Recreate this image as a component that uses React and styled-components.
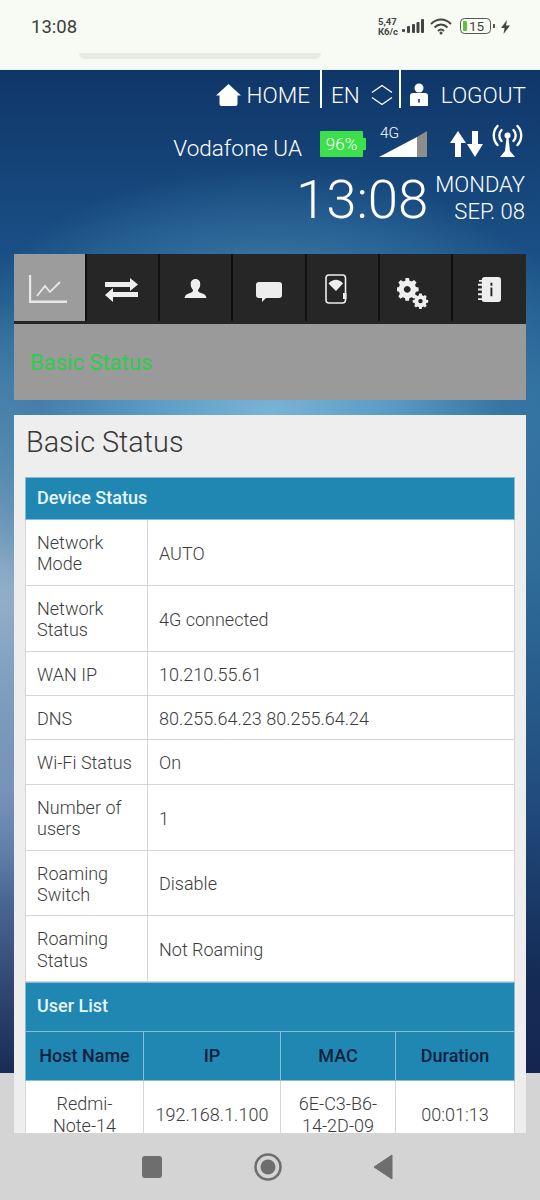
import React from "react";
import styled, { createGlobalStyle } from "styled-components";

const GlobalStyle = createGlobalStyle`
  html, body {
    margin: 0;
    padding: 0;
    width: 540px;
    height: 1200px;
    overflow: hidden;
    font-family: Roboto, "Liberation Sans", sans-serif;
  }
  * { box-sizing: border-box; }
`;

const Screen = styled.div`
  width: 540px;
  height: 1200px;
  display: flex;
  flex-direction: column;
  overflow: hidden;
  background: #d4d4d4;
`;

const StatusBar = styled.div`
  height: 70px;
  flex: none;
  position: relative;
  display: flex;
  justify-content: space-between;
  align-items: center;
  padding: 0 30px 16px 31px;
  background: #f8fbf3;
  border-bottom: 1px solid #e6f0f6;
`;

const PhoneTime = styled.div`
  font-size: 18.5px;
  font-weight: 400;
  color: #3b3d3b;
`;

const StatusIcons = styled.div`
  display: flex;
  align-items: center;
  gap: 4px;
`;

const NetSpeed = styled.div`
  font-size: 9.5px;
  line-height: 9.5px;
  font-weight: 700;
  color: #444;
`;

const Pill = styled.div`
  position: absolute;
  left: 79px;
  top: 53px;
  width: 242px;
  height: 6px;
  border-radius: 0 0 14px 14px;
  background: #e7eae3;
`;

const Page = styled.div`
  flex: 1;
  min-height: 0;
  overflow: hidden;
  padding: 0 14px;
  background:
    radial-gradient(ellipse 340px 250px at 270px 345px, #7ab4d6 0%, #5a9cc5 35%, rgba(60, 125, 170, 0.6) 68%, rgba(60, 125, 170, 0) 100%),
    radial-gradient(ellipse 300px 300px at 0 530px, rgba(150, 178, 202, 0.95) 0%, rgba(150, 178, 202, 0) 100%),
    radial-gradient(ellipse 320px 300px at 0 720px, rgba(115, 140, 185, 0.85) 0%, rgba(115, 140, 185, 0) 100%),
    linear-gradient(180deg, #0f3669 0%, #1a4f85 18%, #2d6c9c 32%, #2f6c9a 50%, #214d7e 72%, #152c57 90%, #132650 100%);
  background-size: 540px 1003px;
  background-repeat: no-repeat;
`;

const TopNav = styled.div`
  display: flex;
  justify-content: flex-end;
  height: 38px;
  color: #fff;
  font-size: 22.5px;
  font-weight: 300;
`;

const NavItem = styled.div`
  display: flex;
  align-items: center;
  gap: ${(p) => p.$gap}px;
  padding: 11px ${(p) => p.$right}px 0 ${(p) => p.$left}px;
  border-right: ${(p) => (p.$divider ? "2px solid #fff" : "none")};
`;

const SignalRow = styled.div`
  display: flex;
  justify-content: flex-end;
  align-items: flex-end;
  height: 49px;
  color: #fff;
  margin-right: 3px;
`;

const Carrier = styled.div`
  font-size: 22.5px;
  font-weight: 300;
  margin-right: 18px;
  line-height: 27px;
  margin-bottom: -5px;
`;

const Battery = styled.div`
  width: 43px;
  height: 26px;
  margin-right: 16px;
  display: flex;
  align-items: center;
  justify-content: center;
  font-size: 17px;
  font-weight: 300;
  color: #fff;
  background: #3ce04a;
  border-radius: 1px;
  position: relative;
  &::after {
    content: "";
    position: absolute;
    right: -3px;
    top: 7px;
    width: 3px;
    height: 12px;
    background: #3ce04a;
  }
`;

const SignalWrap = styled.div`
  position: relative;
  display: flex;
  margin-right: 23px;
`;

const NetType = styled.span`
  position: absolute;
  left: 1px;
  top: -7px;
  font-size: 15.5px;
  line-height: 18px;
  font-weight: 300;
`;

const ArrowWrap = styled.div`
  display: flex;
  margin-right: 9px;
`;

const ClockRow = styled.div`
  display: flex;
  justify-content: flex-end;
  align-items: center;
  height: 84px;
  color: #fff;
  font-weight: 300;
  margin-right: 1px;
`;

const ClockTime = styled.div`
  font-size: 54.5px;
  line-height: 68px;
  font-weight: 300;
  margin-right: 7px;
`;

const ClockDate = styled.div`
  font-size: 22px;
  line-height: 27px;
  text-align: right;
  margin-top: -3px;
`;

const TabBar = styled.div`
  display: flex;
  margin-top: 13px;
  height: 70px;
  background: #262626;
`;

const Tab = styled.div`
  width: 73.14px;
  height: 67px;
  display: flex;
  align-items: center;
  justify-content: center;
  padding: ${(p) => p.$top || 0}px ${(p) => p.$end || 0}px 0 0;
  background: ${(p) => (p.$active ? "#9c9c9c" : "transparent")};
  border-right: 2px solid #111;
  &:last-child { border-right: none; }
`;

const SubBar = styled.div`
  height: 76px;
  display: flex;
  align-items: center;
  padding: 0 16px;
  background: #9a9a9a;
  color: #2fcc4a;
  font-size: 22px;
  font-weight: 400;
`;

const Card = styled.div`
  margin-top: 15px;
  padding: 10px 11px 0;
  height: 720px;
  background: #eee;
`;

const Title = styled.h1`
  margin: 0 0 17px 1px;
  font-size: 28.8px;
  line-height: 35px;
  font-weight: 300;
  color: #383838;
`;

const Table = styled.table`
  width: 490px;
  border-collapse: collapse;
  table-layout: fixed;
  background: #fff;
  font-size: 18px;
  line-height: 21.4px;
  font-weight: 300;
  color: #3c3c3c;
`;

const Section = styled.th`
  height: ${(p) => p.$h}px;
  padding: 0 11px ${(p) => p.$pb || 0}px;
  text-align: left;
  font-weight: 500;
  font-size: 18px;
  color: #e6f6fb;
  background: #2087b3;
  border: 1px solid #86bdd6;
`;

const HeadCell = styled.th`
  height: 49px;
  padding: 0 0 2px;
  font-weight: 500;
  font-size: 18px;
  color: #0d2140;
  background: #2087b3;
  border: 1px solid #86bdd6;
`;

const Cell = styled.td`
  padding: 12px 11px 10px;
  border: 1px solid #d6d6d6;
  text-align: ${(p) => (p.$center ? "center" : "left")};
`;

const BottomNav = styled.div`
  height: 67px;
  flex: none;
  background: #d4d4d4;
`;

const HomeIcon = () => (
  <svg width="25" height="22" viewBox="0 0 25 22"><path fill="#fff" d="M12.500 0 25 11.500h-3.500V20q0 2-2 2h-14q-2 0-2-2v-8.500H0Z" /></svg>
);

const UpDownIcon = () => (
  <svg width="22" height="22" viewBox="0 0 22 22" fill="none" stroke="#fff" strokeWidth="1.400"><path d="M1 8.500 11 1.500l10 7M1 13.500 11 20.500l10-7" /></svg>
);

const UserBadgeIcon = () => (
  <svg width="20" height="24" viewBox="0 0 20 24"><circle cx="10" cy="5" r="4.500" fill="#fff" /><path fill="#fff" fillRule="evenodd" d="M1 23V13q0-3 3-3h12q3 0 3 3v10ZM9.200 16v3.500h1.600V16Z" /></svg>
);

const SignalIcon = () => (
  <svg width="48" height="26" viewBox="0 0 48 26"><path fill="#fff" d="M0 26 38 6v20Z" /><path fill="#8d8d8d" d="M38 6 48 0v26H38Z" /></svg>
);

const ArrowsIcon = () => (
  <svg width="33" height="26" viewBox="0 0 33 26"><path fill="#fff" d="M8 0 16 12H11V26H5V12H0ZM25 26 33 13H28V0H22V13H17Z" /></svg>
);

const AntennaIcon = () => (
  <svg width="31" height="33" viewBox="0 0 31 33" fill="none" stroke="#fff" strokeWidth="2.400">
    <circle cx="15.500" cy="11.500" r="3" fill="#fff" stroke="none" />
    <path d="M9.500 6a8 8 0 0 0 0 11M21.500 6a8 8 0 0 1 0 11M5.500 2a14 14 0 0 0 0 19M25.500 2a14 14 0 0 1 0 19" strokeLinecap="round" />
    <path fill="#fff" stroke="none" d="M14.500 14h2l1.500 13 5 6H8l5-6Z" />
  </svg>
);

const tabs = [
  {
    top: 2,
    end: 3,
    icon: <svg width="38" height="28" viewBox="0 0 38 28" fill="none" stroke="#e8e8e8" strokeWidth="1.800"><path d="M1 0v26.800h37" strokeWidth="2.400" /><path d="M8 21 16 11l5 6L31 7" /></svg>,
  },
  {
    top: 4,
    end: 2,
    icon: <svg width="33" height="24" viewBox="0 0 33 24"><path fill="#eee" d="M0 4h25V0l8 6.500-8 6.500V9H0ZM33 14H8v-4l-8 7 8 7v-5h25Z" /></svg>,
  },
  {
    top: 2,
    icon: <svg width="23" height="19" viewBox="0 0 24 20"><path fill="#eee" d="M12 0c3.500 0 5 2.600 5 5.500 0 2.500-1 4.500-2.400 6 0 2 1.400 2.700 4 3.600 2.700.9 4.400 2 5 4.900H.4c.6-2.900 2.300-4 5-4.900 2.600-.9 4-1.600 4-3.600C8 10 7 8 7 5.500 7 2.600 8.500 0 12 0Z" /></svg>,
  },
  {
    top: 9,
    icon: <svg width="26" height="20" viewBox="0 0 26 20"><path fill="#eee" d="M3 0h20q3 0 3 3v10q0 3-3 3H10l-4 4v-4H3q-3 0-3-3V3q0-3 3-3Z" /></svg>,
  },
  {
    top: 2,
    end: 12,
    icon: <svg width="22" height="30" viewBox="0 0 22 30"><rect x="1" y="1" width="19.500" height="28" rx="3" fill="none" stroke="#eee" strokeWidth="1.600" /><path fill="#eee" d="M3.500 9.500C8 4.500 14 4.500 18 9.500l-7 7.500ZM18 19h3.500v6H18Z" /></svg>,
  },
  {
    top: 13,
    end: 4,
    icon: <svg width="32" height="32" viewBox="0 0 36 36"><g fill="#eee"><path fillRule="evenodd" d="M9.500 0h4l.6 3 2.500 1 2.600-1.700 2.800 2.800L20.300 7.700l1 2.500 3 .6v4l-3 .6-1 2.500 1.700 2.600-2.800 2.800-2.600-1.700-2.500 1-.6 3h-4l-.6-3-2.500-1-2.600 1.700L1.500 20.500l1.700-2.600-1-2.500-3-.6v-4l3-.6 1-2.500L1.500 5.100 4.300 2.300 6.900 4l2.500-1ZM11.500 9a3.800 3.800 0 1 0 .01 0Z" /><path fillRule="evenodd" d="M25 17.500h2.800l.4 2 1.600.7 1.700-1.100 2 2-1.100 1.700.7 1.600 2 .4v2.800l-2 .4-.7 1.600 1.100 1.700-2 2-1.700-1.100-1.600.7-.4 2H25l-.4-2-1.600-.7-1.700 1.100-2-2 1.100-1.700-.7-1.600-2-.4v-2.800l2-.4.7-1.600-1.100-1.700 2-2 1.700 1.100 1.600-.7ZM26.400 23.500a2.500 2.500 0 1 0 .01 0Z" /></g></svg>,
  },
  {
    top: 4,
    icon: <svg width="23" height="25" viewBox="0 0 24 26"><path fill="#eee" fillRule="evenodd" d="M7 0h14q3 0 3 3v20q0 3-3 3H7q-3 0-3-2H0v-2h4v-3H0v-2h4v-3H0v-2h4V9H0V7h4V5H1V3h3q0-3 3-3ZM13 6v3h2V6Zm0 5v9h2v-9Z" /></svg>,
  },
];

const deviceRows = [
  ["Network Mode", "AUTO"],
  ["Network Status", "4G connected"],
  ["WAN IP", "10.210.55.61"],
  ["DNS", "80.255.64.23 80.255.64.24"],
  ["Wi-Fi Status", "On"],
  ["Number of users", "1"],
  ["Roaming Switch", "Disable"],
  ["Roaming Status", "Not Roaming"],
];

const App = () => (
  <Screen>
    <GlobalStyle />
    <StatusBar>
      <PhoneTime>13:08</PhoneTime>
      <StatusIcons>
        <NetSpeed>5,47<br />К6/с</NetSpeed>
        <svg width="22" height="15" viewBox="0 0 22 15"><g fill="#444"><rect x="0" y="10" width="3" height="3" rx="1" /><rect x="5" y="7" width="3" height="7" rx="1" /><rect x="10" y="5" width="3" height="9" rx="1" /><rect x="14.500" y="3" width="3" height="11" rx="1" /><rect x="19" y="0" width="3" height="14" rx="1" /></g></svg>
        <svg width="22" height="17" viewBox="0 0 22 17" fill="none" stroke="#444" strokeWidth="2" style={{ marginLeft: 2 }}><path d="M1 6c6-6 14-6 20 0M4.500 9.500c4-4 9-4 13 0M8 13c2-2 4-2 6 0" /><circle cx="11" cy="15" r="1.500" fill="#444" stroke="none" /></svg>
        <svg width="37" height="17" viewBox="0 0 37 17" style={{ marginLeft: 4 }}>
          <rect x=".5" y=".5" width="30" height="15" rx="4" fill="none" stroke="#555" />
          <rect x="3" y="3" width="4" height="10" rx="1" fill="#5fc33f" />
          <text x="9" y="13" fontSize="13.500" fontFamily="Roboto" fill="#444">15</text>
          <rect x="33" y="6" width="2" height="4" fill="#555" />
        </svg>
        <svg width="9" height="14" viewBox="0 0 9 14"><path fill="#444" d="M6 0 0 8h3.500L2.500 14 9 5.500H5Z" /></svg>
      </StatusIcons>
      <Pill />
    </StatusBar>
    <Page>
      <TopNav>
        <NavItem $divider $gap={6} $left={8} $right={10}><HomeIcon />HOME</NavItem>
        <NavItem $divider $gap={11} $left={9} $right={6}>EN<UpDownIcon /></NavItem>
        <NavItem $gap={12} $left={8} $right={0}><UserBadgeIcon />LOGOUT</NavItem>
      </TopNav>
      <SignalRow>
        <Carrier>Vodafone UA</Carrier>
        <Battery>96%</Battery>
        <SignalWrap>
          <NetType>4G</NetType>
          <SignalIcon />
        </SignalWrap>
        <ArrowWrap><ArrowsIcon /></ArrowWrap>
        <AntennaIcon />
      </SignalRow>
      <ClockRow>
        <ClockTime>13:08</ClockTime>
        <ClockDate>MONDAY<br />SEP. 08</ClockDate>
      </ClockRow>
      <TabBar>
        {tabs.map((t, i) => (
          <Tab key={i} $active={i === 0} $top={t.top} $end={t.end}>{t.icon}</Tab>
        ))}
      </TabBar>
      <SubBar>Basic Status</SubBar>
      <Card>
        <Title>Basic Status</Title>
        <Table>
          <colgroup>
            <col style={{ width: 122 }} />
            <col />
          </colgroup>
          <tbody>
            <tr><Section colSpan={2} $h={42} $pb={1}>Device Status</Section></tr>
            {deviceRows.map(([label, value]) => (
              <tr key={label}>
                <Cell>{label}</Cell>
                <Cell>{value}</Cell>
              </tr>
            ))}
          </tbody>
        </Table>
        <Table>
          <colgroup>
            <col style={{ width: 118 }} />
            <col style={{ width: 137 }} />
            <col style={{ width: 115 }} />
            <col />
          </colgroup>
          <tbody>
            <tr><Section colSpan={4} $h={49} $pb={3}>User List</Section></tr>
            <tr>
              <HeadCell>Host Name</HeadCell>
              <HeadCell>IP</HeadCell>
              <HeadCell>MAC</HeadCell>
              <HeadCell>Duration</HeadCell>
            </tr>
            <tr>
              <Cell $center>Redmi-Note-14</Cell>
              <Cell $center>192.168.1.100</Cell>
              <Cell $center>6E-C3-B6-14-2D-09</Cell>
              <Cell $center>00:01:13</Cell>
            </tr>
          </tbody>
        </Table>
      </Card>
    </Page>
    <BottomNav>
      <svg width="540" height="67" viewBox="0 0 540 67">
        <rect x="142" y="23" width="20" height="22" rx="3" fill="#6e6e6e" />
        <circle cx="268" cy="34" r="12.500" fill="none" stroke="#6e6e6e" strokeWidth="2.600" />
        <circle cx="268" cy="34" r="7.500" fill="#6e6e6e" />
        <path d="M374 34 392 22v24Z" fill="#6e6e6e" stroke="#6e6e6e" strokeLinejoin="round" />
      </svg>
    </BottomNav>
  </Screen>
);

export default App;
